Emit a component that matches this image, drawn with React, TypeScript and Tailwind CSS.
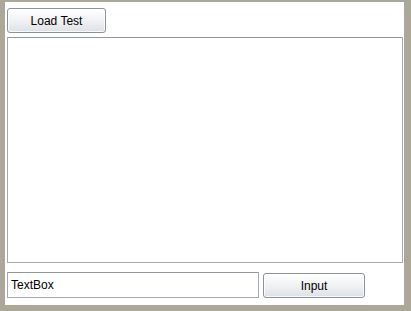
export default function App() {
  return (
    <div className="w-[411px] h-[311px] bg-[#aca899] pl-[5px] pt-[2px] pr-[7px] pb-[6px] font-['Liberation_Sans',Arial,sans-serif] text-[12px] text-black">
      <div className="h-full bg-white flex flex-col pl-[2px] pr-[1px] pt-[6px]">
        {/* Top button */}
        <button className="w-[99px] h-[25px] rounded-[3px] border border-[#8a929c] bg-gradient-to-b from-white via-[#f1f2f4] to-[#dde1e6] shadow-[inset_0_0_0_1px_rgba(255,255,255,0.8)]">
          Load Test
        </button>

        {/* Output panel */}
        <div className="mt-[4px] h-[226px] border border-[#a4abb4] border-t-[#8f969f] rounded-[1px]" />

        {/* Bottom row */}
        <div className="mt-[9px] flex items-start gap-[4px]">
          <div className="w-[252px] h-[26px] border border-[#a4abb4] border-t-[#8f969f] flex items-center pl-[3px]">
            TextBox
          </div>
          <button className="mt-[1px] w-[102px] h-[25px] rounded-[3px] border border-[#8a929c] bg-gradient-to-b from-white via-[#f1f2f4] to-[#dde1e6] shadow-[inset_0_0_0_1px_rgba(255,255,255,0.8)]">
            Input
          </button>
        </div>
      </div>
    </div>
  );
}
